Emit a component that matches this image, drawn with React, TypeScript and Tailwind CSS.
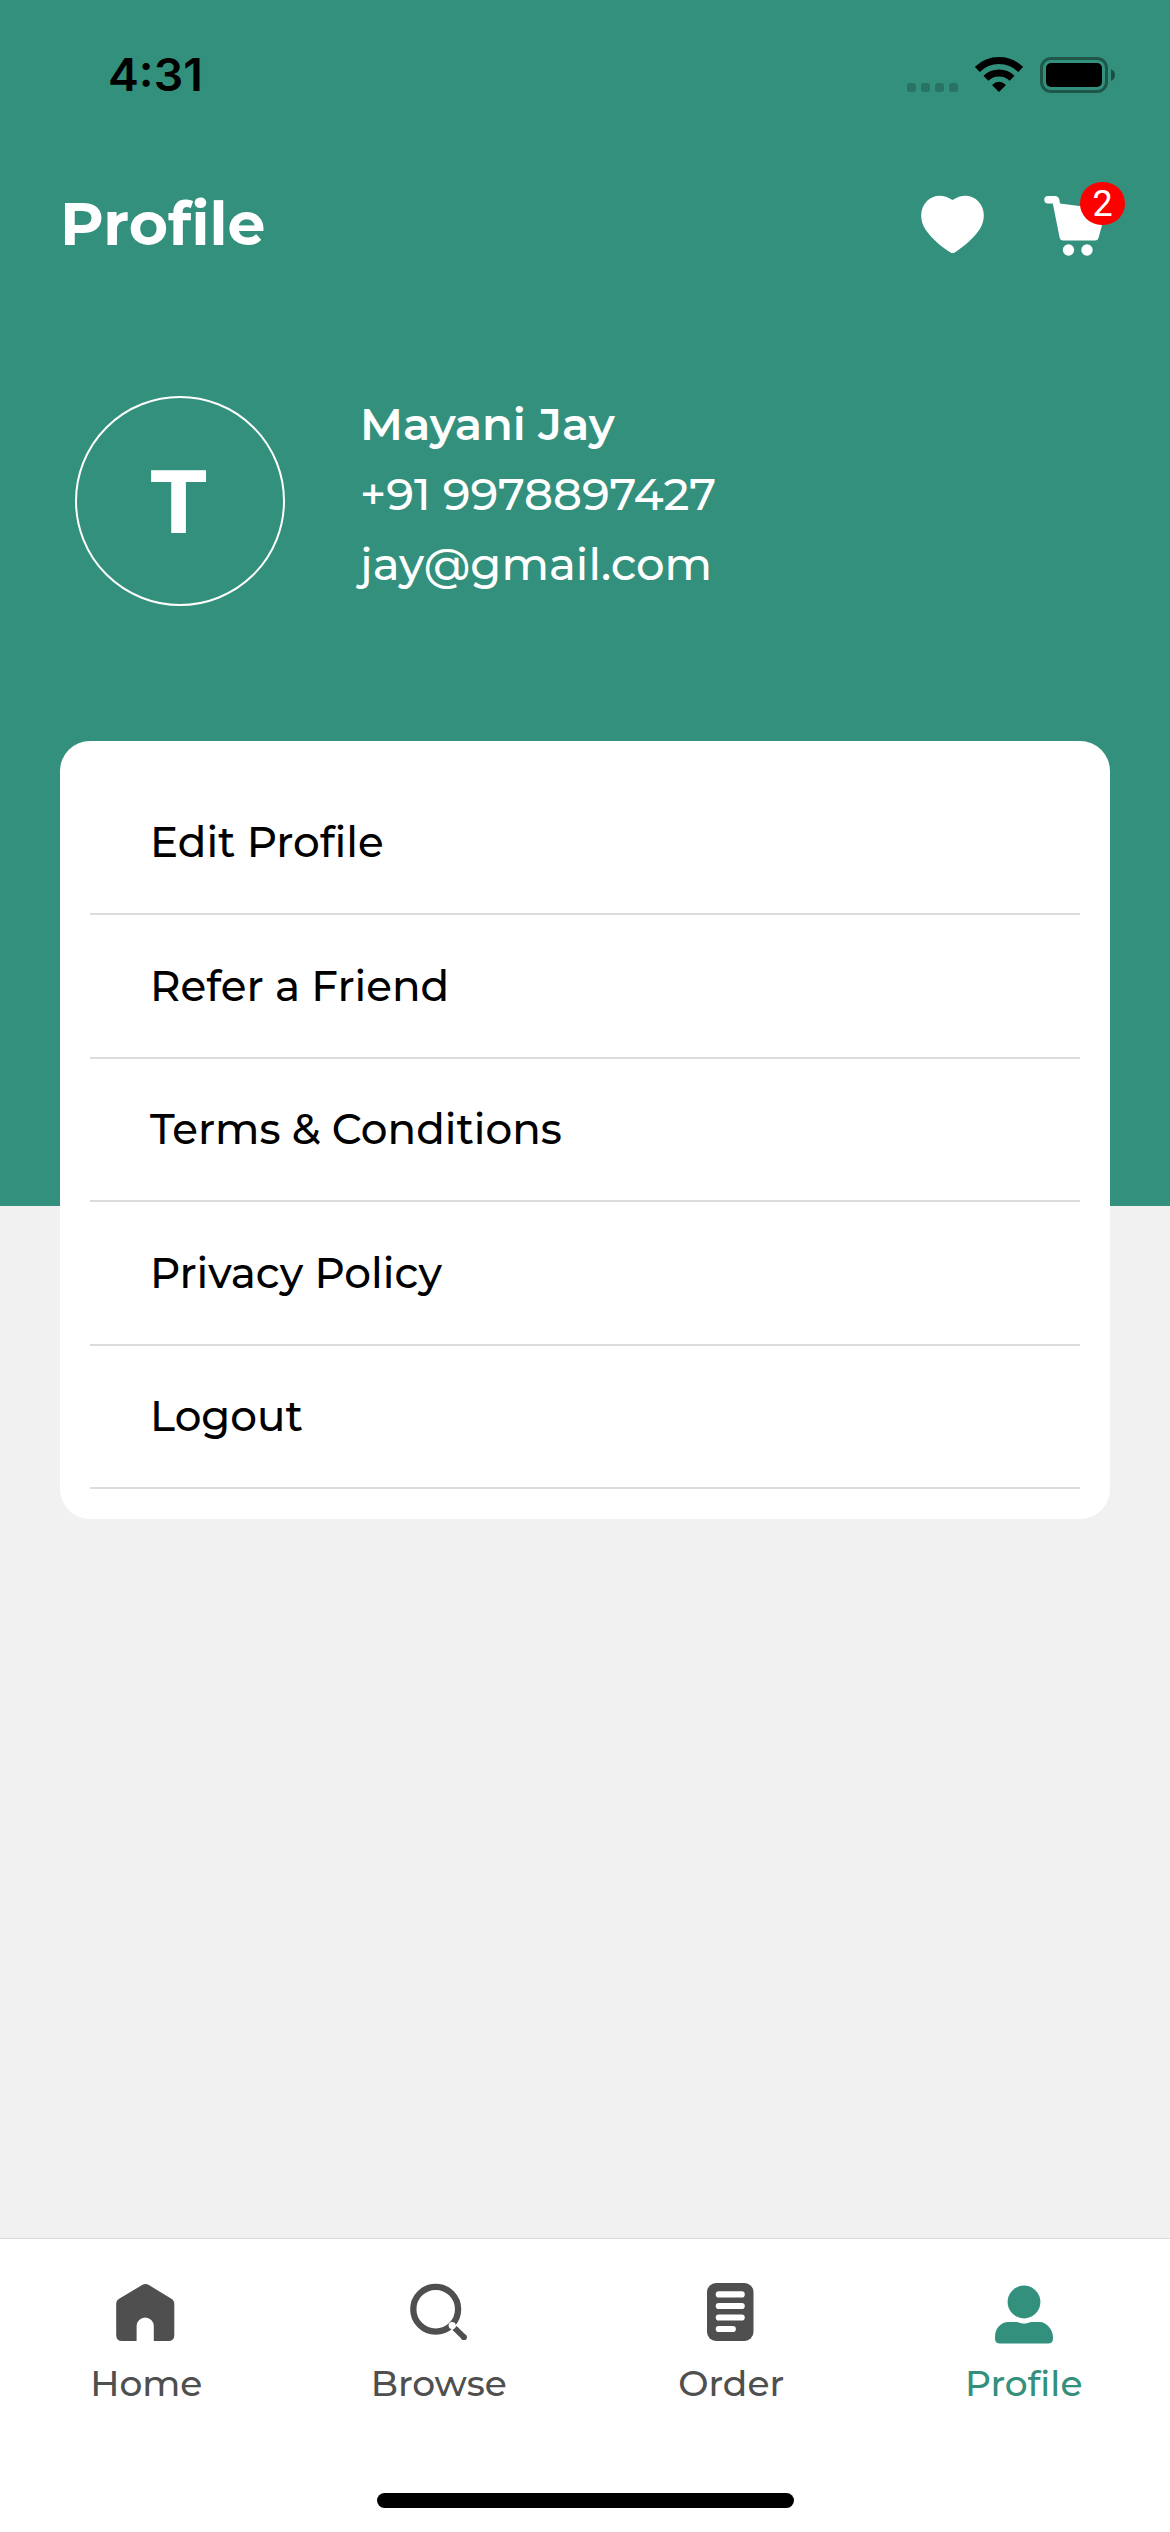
import React from "react";

const menu = ["Edit Profile", "Refer a Friend", "Terms & Conditions", "Privacy Policy", "Logout"];

function StatusBar() {
  return (
    <div className="flex h-[149px] items-center justify-between pl-[108px] pr-[55px]">
      <span className="origin-left scale-x-[1.03] font-['Inter'] text-[45px] leading-none font-semibold text-black">4:31</span>
      <div className="mb-px flex items-end">
        <div className="mr-[17px] mb-px flex gap-[5px]">
          {[0, 1, 2, 3].map((i) => (
            <span key={i} className="size-[9px] rounded-[2.5px] bg-black/20" />
          ))}
        </div>
        <svg className="mr-[17px] mb-px h-[36px] w-[48px]" viewBox="0 0 48 36" fill="none">
          <path d="M2.3 13.4A31 31 0 0 1 45.7 13.4" stroke="#000" strokeWidth="7" />
          <path d="M10.9 22.2A19 19 0 0 1 37.1 22.2" stroke="#000" strokeWidth="7" />
          <path d="M24 36 17 29Q24 22.4 31 29Z" fill="#000" />
        </svg>
        <svg className="h-[36px] w-[75px]" viewBox="0 0 75 36" fill="none">
          <rect x="1.5" y="1.5" width="65" height="33" rx="9.5" stroke="#000" strokeOpacity=".4" strokeWidth="3" />
          <rect x="6" y="6" width="56" height="24" rx="5" fill="#000" />
          <path d="M71 12Q75 14 75 18T71 24Z" fill="#000" fillOpacity=".45" />
        </svg>
      </div>
    </div>
  );
}

function Header() {
  return (
    <div className="flex h-[150px] items-center justify-between pl-[60px] pr-[45px]">
      <h1 className="text-[60px] leading-none font-bold">Profile</h1>
      <div className="flex items-center gap-[60px]">
        <svg className="size-[63px]" viewBox="0 0 63 63" fill="#fff">
          <path d="M31.5 7C22 .5 12 1.8 6 8C-1.5 15.5-1.5 27.5 4.5 36.5C11 46 20 53.5 29 59.2Q31.5 61 34 59.2C43 53.5 52 46 58.5 36.5C64.5 27.5 64.5 15.5 57 8C51 1.8 41 .5 31.5 7Z" />
        </svg>
        <div className="relative h-[74px] w-[81px]">
          <svg className="h-[74px] w-[81px]" viewBox="0 -2 81 74" fill="#fff">
            <path d="M4 7H11Q14.5 7 15.3 10.5L16 14.5 58 20V36L54.5 49Q53.9 51.5 51 51.5H19Q16.3 51.5 15.7 49L8.8 14.5H4A3.75 3.75 0 0 1 4 7Z" />
            <circle cx="24.5" cy="61" r="5.7" />
            <circle cx="43" cy="61" r="5.7" />
          </svg>
          <span className="absolute top-[-5px] right-0 flex h-[43px] w-[45px] items-center justify-center rounded-full bg-[#ff0000] pt-px font-['Roboto'] text-[36px] leading-none">
            2
          </span>
        </div>
      </div>
    </div>
  );
}

function UserInfo() {
  return (
    <div className="mt-[97px] flex pl-[75px]">
      <div className="flex size-[210px] items-center justify-center rounded-full border-2 border-white">
        <span className="mr-[3px] text-[90px] leading-none font-bold">T</span>
      </div>
      <div className="-mt-[7px] ml-[75px] flex flex-col items-start text-[45px] leading-[70px]">
        <span className="font-semibold">Mayani Jay</span>
        <span className="font-medium">+91 9978897427</span>
        <span className="font-medium">jay@gmail.com</span>
      </div>
    </div>
  );
}

function HomeIcon() {
  return (
    <svg className="size-[72px]" viewBox="0 0 72 72" fill="currentColor">
      <path d="M32.5 8.8Q35.5 7.2 38.5 8.8L61 22.6Q64.3 24.6 64.3 28V59Q64.3 65 58.3 65H43.8V50A8.6 8.6 0 0 0 26.6 50V65H12Q6.2 65 6.2 59V28Q6.2 24.6 9.5 22.6Z" />
    </svg>
  );
}

function BrowseIcon() {
  return (
    <svg className="size-[72px]" viewBox="0 0 72 72" fill="none">
      <circle cx="32.7" cy="33.2" r="22.4" stroke="currentColor" strokeWidth="6.3" />
      <path d="M51.6 52 61 61.3" stroke="currentColor" strokeWidth="5.8" />
      <circle cx="61" cy="61.2" r="2.9" fill="currentColor" />
      <circle cx="49.2" cy="49.5" r="3.6" fill="#fff" />
    </svg>
  );
}

function OrderIcon() {
  return (
    <svg className="size-[72px]" viewBox="0 0 72 72" fill="none">
      <rect x="12" y="7" width="46.5" height="58" rx="9" fill="currentColor" />
      <path d="M23.8 18.4H46.7M23.8 30H46.7M23.8 41.5H46.7M23.8 53H37.8" stroke="#fff" strokeWidth="6.2" strokeLinecap="round" />
    </svg>
  );
}

function ProfileIcon() {
  return (
    <svg className="size-[72px]" viewBox="0 0 72 72" fill="currentColor">
      <circle cx="36" cy="26" r="16.4" />
      <path d="M20.5 45.9H27.5C31 45.9 31.5 47.5 36 47.5S41 45.9 44.5 45.9H51.5C59 45.9 65 54 65 61V62.5Q65 67.5 60 67.5H12Q7 67.5 7 62.5V61C7 52 13 45.9 20.5 45.9Z" />
    </svg>
  );
}

const tabs = [
  { label: "Home", Icon: HomeIcon, color: "text-[#4f4f4f]" },
  { label: "Browse", Icon: BrowseIcon, color: "text-[#4f4f4f]" },
  { label: "Order", Icon: OrderIcon, color: "text-[#4f4f4f]" },
  { label: "Profile", Icon: ProfileIcon, color: "text-[#33907c]" },
];

export default function App() {
  return (
    <div className="flex h-[2532px] w-[1170px] flex-col overflow-hidden bg-[#f1f1f1] font-['Montserrat','Inter',sans-serif]">
      <div className="h-[1206px] shrink-0 bg-[#33907c] text-white">
        <StatusBar />
        <Header />
        <UserInfo />
      </div>
      <div className="z-10 mx-[60px] -mt-[465px] h-[778px] shrink-0 rounded-[30px] bg-white px-[30px] pt-[30.5px] text-black">
        {menu.map((label) => (
          <div key={label} className="flex h-[143.5px] items-center border-b-2 border-[#dcdcdc] pl-[60px]">
            <span className="text-[42px] leading-none font-medium">{label}</span>
          </div>
        ))}
      </div>
      <div className="mt-auto flex h-[294px] shrink-0 flex-col border-t border-[#d8d8d8] bg-white">
        <div className="grid grid-cols-4 pt-[37px]">
          {tabs.map(({ label, Icon, color }) => (
            <div key={label} className={`flex flex-col items-center ${color}`}>
              <Icon />
              <span className="mt-[17px] text-[36px] leading-[36px] font-medium">{label}</span>
            </div>
          ))}
        </div>
        <div className="mx-auto mt-auto mb-[24px] h-[15px] w-[417px] rounded-full bg-black" />
      </div>
    </div>
  );
}
